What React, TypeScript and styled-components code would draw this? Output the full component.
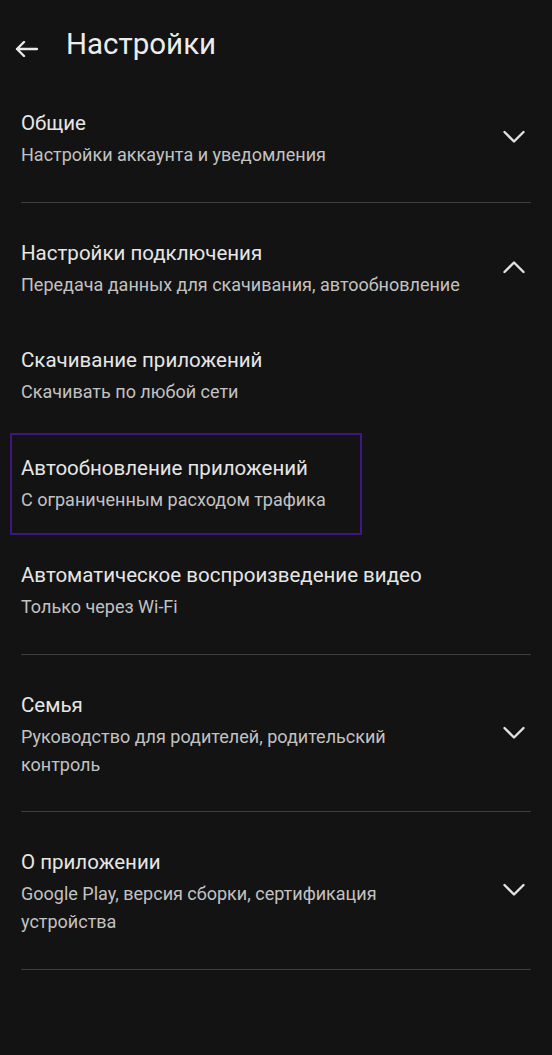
import React from "react";
import styled, { createGlobalStyle } from "styled-components";

const Global = createGlobalStyle`
  html, body {
    margin: 0;
    padding: 0;
    background: #131313;
  }
  body {
    font-family: Roboto, "Noto Sans", "Liberation Sans", sans-serif;
    -webkit-font-smoothing: antialiased;
  }
`;

const Page = styled.div`
  width: 552px;
  min-height: 1055px;
  background: #131313;
  color: #e6e6e6;
  box-sizing: border-box;
`;

const TopBar = styled.header`
  display: flex;
  align-items: flex-start;
  height: 73px;
  padding: 26px 0 0 15px;
  box-sizing: border-box;
  gap: 28px;
`;

const BackButton = styled.button`
  display: flex;
  align-items: center;
  justify-content: center;
  width: 23px;
  height: 16px;
  padding: 0;
  margin-top: 15px;
  border: none;
  background: none;
  color: #e8e8e8;
`;

const PageTitle = styled.h1`
  margin: 0;
  font-size: 29.5px;
  line-height: 36px;
  font-weight: 400;
  color: #ececec;
`;

const List = styled.div`
  display: flex;
  flex-direction: column;
  padding: 0 21px;
`;

const Section = styled.section`
  display: flex;
  flex-direction: column;
  padding: 10px 0 11px;
  border-bottom: 1.5px solid #3e3e3e;
`;

const Row = styled.div<{ $focused?: boolean }>`
  position: relative;
  display: grid;
  grid-template-columns: 1fr 34px;
  column-gap: 33px;
  align-items: center;
  padding: 22px 0 21.5px;

  ${(p) =>
    p.$focused &&
    `
    &::before {
      content: "";
      position: absolute;
      left: -11px;
      top: 5px;
      width: 352px;
      height: 102px;
      border: 2px solid #3f1785;
      box-sizing: border-box;
      pointer-events: none;
    }
  `}
`;

const Texts = styled.div`
  display: flex;
  flex-direction: column;
  min-width: 0;
`;

const Title = styled.div`
  font-size: 20.5px;
  line-height: 36px;
  color: #e6e6e6;
`;

const Subtitle = styled.div`
  font-size: 18px;
  line-height: 28px;
  color: #c2c2c2;
`;

const Chevron = styled.svg`
  justify-self: center;
  color: #e2e2e2;
`;

const ArrowBack = () => (
  <svg width="23" height="16" viewBox="0 0 23 16" fill="none">
    <path
      d="M22 8H2M9 1L2 8l7 7"
      stroke="currentColor"
      strokeWidth="2.4"
      strokeLinecap="round"
      strokeLinejoin="round"
    />
  </svg>
);

const ChevronIcon = ({ up }: { up?: boolean }) => (
  <Chevron width="22" height="14" viewBox="0 0 22 14" fill="none">
    <path
      d={up ? "M1.5 12L11 2.5l9.5 9.5" : "M1.5 2L11 11.5 20.5 2"}
      stroke="currentColor"
      strokeWidth="2.4"
      strokeLinecap="round"
      strokeLinejoin="round"
    />
  </Chevron>
);

type Item = { title: string; subtitle: string; focused?: boolean };
type Group = {
  title: string;
  subtitle: string;
  expanded?: boolean;
  items?: Item[];
};

const groups: Group[] = [
  { title: "Общие", subtitle: "Настройки аккаунта и уведомления" },
  {
    title: "Настройки подключения",
    subtitle: "Передача данных для скачивания, автообновление",
    expanded: true,
    items: [
      { title: "Скачивание приложений", subtitle: "Скачивать по любой сети" },
      {
        title: "Автообновление приложений",
        subtitle: "С ограниченным расходом трафика",
        focused: true,
      },
      {
        title: "Автоматическое воспроизведение видео",
        subtitle: "Только через Wi-Fi",
      },
    ],
  },
  { title: "Семья", subtitle: "Руководство для родителей, родительский контроль" },
  {
    title: "О приложении",
    subtitle: "Google Play, версия сборки, сертификация устройства",
  },
];

export default function App() {
  return (
    <Page>
      <Global />
      <TopBar>
        <BackButton aria-label="Назад">
          <ArrowBack />
        </BackButton>
        <PageTitle>Настройки</PageTitle>
      </TopBar>
      <List>
        {groups.map((g) => (
          <Section key={g.title}>
            <Row>
              <Texts>
                <Title>{g.title}</Title>
                <Subtitle>{g.subtitle}</Subtitle>
              </Texts>
              <ChevronIcon up={g.expanded} />
            </Row>
            {g.items?.map((it) => (
              <Row key={it.title} $focused={it.focused}>
                <Texts>
                  <Title>{it.title}</Title>
                  <Subtitle>{it.subtitle}</Subtitle>
                </Texts>
              </Row>
            ))}
          </Section>
        ))}
      </List>
    </Page>
  );
}
